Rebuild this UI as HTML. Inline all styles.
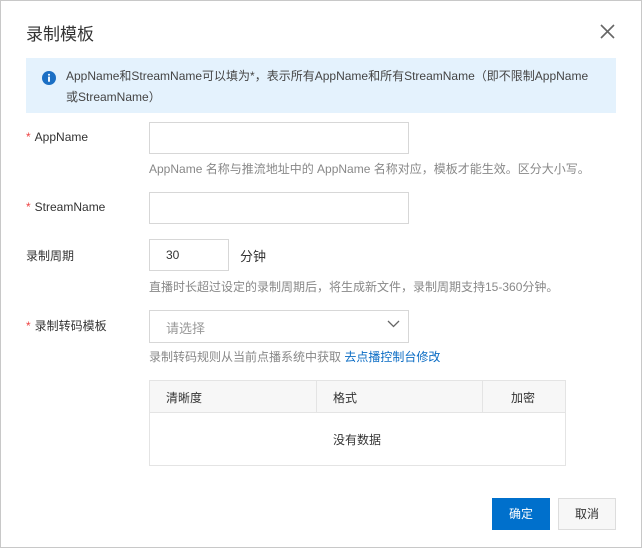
<!DOCTYPE html>
<html><head><meta charset="utf-8"><style>
*{box-sizing:border-box;margin:0;padding:0}
body{width:642px;height:548px;background:#fff;font-family:"Liberation Sans","Noto Sans CJK SC",sans-serif;font-size:12px;color:#333;position:relative;overflow:hidden}
.frame{position:absolute;left:0;top:0;width:642px;height:548px;border:1px solid #c8c8c8}
.abs{position:absolute;white-space:nowrap}
.inp{position:absolute;border:1px solid #d7d7d7;background:#fff}
.req{color:#e44;margin-right:4px}
.help{color:#888;font-size:12px}
</style></head><body>
<div class="frame"></div>
<div class="abs" style="left:26px;top:20px;font-size:17px;color:#333">录制模板</div>
<svg class="abs" style="left:600px;top:24px" width="15" height="15" viewBox="0 0 15 15"><path d="M1 1L14 14M14 1L1 14" stroke="#666" stroke-width="1.6"/></svg>
<div class="abs" style="left:26px;top:58px;width:590px;height:55px;background:#e4f2fd"></div>
<svg class="abs" style="left:42px;top:71px" width="14" height="14" viewBox="0 0 15 15"><circle cx="7.5" cy="7.5" r="7.5" fill="#1b6fc4"/><rect x="6.5" y="6" width="2" height="5.5" fill="#fff"/><circle cx="7.5" cy="4" r="1.1" fill="#fff"/></svg>
<div class="abs" style="left:66px;top:66px;line-height:21px;color:#444">AppName和StreamName可以填为*，表示所有AppName和所有StreamName（即不限制AppName<br>或StreamName）</div>

<div class="abs" style="left:26px;top:130px"><span class="req">*</span>AppName</div>
<div class="inp" style="left:149px;top:122px;width:260px;height:32px"></div>
<div class="abs help" style="left:149px;top:160px">AppName 名称与推流地址中的 AppName 名称对应，模板才能生效。区分大小写。</div>

<div class="abs" style="left:26px;top:200px"><span class="req">*</span>StreamName</div>
<div class="inp" style="left:149px;top:192px;width:260px;height:32px"></div>

<div class="abs" style="left:26px;top:247px">录制周期</div>
<div class="inp" style="left:149px;top:239px;width:80px;height:32px"></div>
<div class="abs" style="left:166px;top:248px">30</div>
<div class="abs" style="left:240px;top:246px;font-size:13px">分钟</div>
<div class="abs help" style="left:149px;top:278px">直播时长超过设定的录制周期后，将生成新文件，录制周期支持15-360分钟。</div>

<div class="abs" style="left:26px;top:317px"><span class="req">*</span>录制转码模板</div>
<div class="inp" style="left:149px;top:310px;width:260px;height:33px"></div>
<div class="abs" style="left:166px;top:318px;color:#999;font-size:13px">请选择</div>
<svg class="abs" style="left:387px;top:320px" width="13" height="8" viewBox="0 0 13 8"><path d="M1 1L6.5 6.5L12 1" stroke="#666" stroke-width="1.3" fill="none"/></svg>
<div class="abs help" style="left:149px;top:348px">录制转码规则从当前点播系统中获取 <span style="color:#0b6cc4">去点播控制台修改</span></div>

<div class="abs" style="left:149px;top:380px;width:417px;height:86px;border:1px solid #e4e4e4"></div>
<div class="abs" style="left:150px;top:381px;width:415px;height:32px;background:#f7f7f7;border-bottom:1px solid #e4e4e4"></div>
<div class="abs" style="left:316px;top:381px;width:1px;height:32px;background:#e4e4e4"></div>
<div class="abs" style="left:482px;top:381px;width:1px;height:32px;background:#e4e4e4"></div>
<div class="abs" style="left:166px;top:389px">清晰度</div>
<div class="abs" style="left:333px;top:389px">格式</div>
<div class="abs" style="left:511px;top:389px">加密</div>
<div class="abs" style="left:333px;top:431px">没有数据</div>

<div class="abs" style="left:492px;top:498px;width:58px;height:32px;background:#0070cc;color:#fff;text-align:center;line-height:32px">确定</div>
<div class="abs" style="left:558px;top:498px;width:58px;height:32px;background:#f7f7f7;border:1px solid #ddd;text-align:center;line-height:30px">取消</div>
</body></html>
